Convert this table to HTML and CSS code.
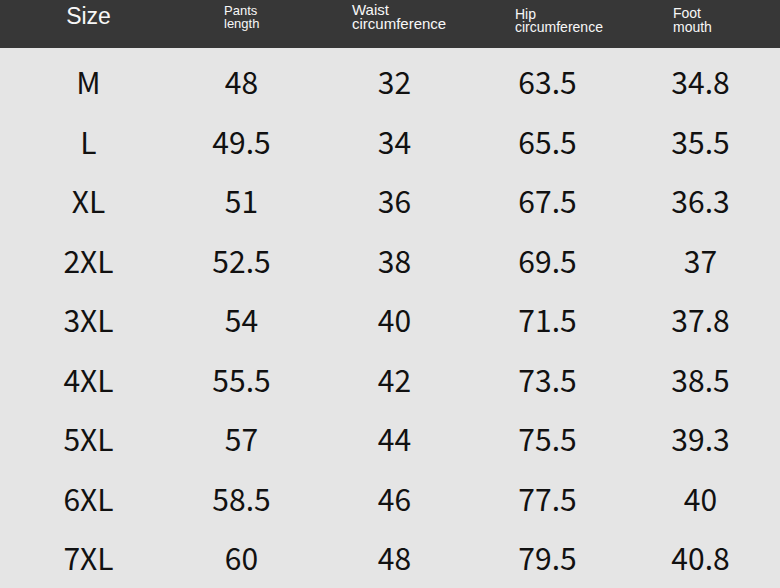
FILE: index.html
```html
<!DOCTYPE html>
<html>
<head>
<meta charset="utf-8">
<link rel="stylesheet" href="styles.css">
</head>
<body>
<div class="chart">
  <div class="head">
    <div class="hcell h-size">Size</div>
    <div class="hcell h-pants">Pants<br>length</div>
    <div class="hcell h-waist">Waist<br>circumference</div>
    <div class="hcell h-hip">Hip<br>circumference</div>
    <div class="hcell h-foot">Foot<br>mouth</div>
  </div>
  <div class="rows">
    <div class="row"><span>M</span><span>48</span><span>32</span><span>63.5</span><span>34.8</span></div>
    <div class="row"><span>L</span><span>49.5</span><span>34</span><span>65.5</span><span>35.5</span></div>
    <div class="row"><span>XL</span><span>51</span><span>36</span><span>67.5</span><span>36.3</span></div>
    <div class="row"><span>2XL</span><span>52.5</span><span>38</span><span>69.5</span><span>37</span></div>
    <div class="row"><span>3XL</span><span>54</span><span>40</span><span>71.5</span><span>37.8</span></div>
    <div class="row"><span>4XL</span><span>55.5</span><span>42</span><span>73.5</span><span>38.5</span></div>
    <div class="row"><span>5XL</span><span>57</span><span>44</span><span>75.5</span><span>39.3</span></div>
    <div class="row"><span>6XL</span><span>58.5</span><span>46</span><span>77.5</span><span>40</span></div>
    <div class="row"><span>7XL</span><span>60</span><span>48</span><span>79.5</span><span>40.8</span></div>
  </div>
</div>
</body>
</html>
```

FILE: styles.css
```css
html, body {
  margin: 0;
  padding: 0;
}
body {
  width: 780px;
  height: 588px;
  overflow: hidden;
  background: #e5e5e5;
}
.chart {
  width: 780px;
  height: 588px;
  display: flex;
  flex-direction: column;
  background: #e5e5e5;
}
.head {
  box-sizing: border-box;
  flex: 0 0 48px;
  height: 48px;
  background: #373737;
  color: #f7f7f7;
  font-family: "Liberation Sans", Arial, sans-serif;
  display: grid;
  grid-template-columns: 153px 153px 153px 153px 153px;
  padding-left: 12px;
  align-items: start;
}
.hcell {
  white-space: nowrap;
}
.h-size {
  font-size: 23px;
  line-height: 23px;
  padding-top: 5px;
  text-align: center;
}
.h-pants {
  font-size: 13px;
  line-height: 13px;
  padding-top: 4px;
  padding-left: 59px;
}
.h-waist {
  font-size: 15px;
  line-height: 14px;
  padding-top: 3px;
  padding-left: 34px;
}
.h-hip {
  font-size: 14px;
  line-height: 13px;
  padding-top: 8px;
  padding-left: 44px;
}
.h-foot {
  font-size: 14px;
  line-height: 14px;
  padding-top: 6px;
  padding-left: 49px;
}
.rows {
  padding-top: 4px;
  padding-left: 12px;
  font-family: "Noto Sans CJK SC", "Noto Sans", sans-serif;
  font-size: 30px;
  color: #111;
}
.row {
  display: grid;
  grid-template-columns: 153px 153px 153px 153px 153px;
  height: 59.5px;
  line-height: 59.5px;
  text-align: center;
}
```
